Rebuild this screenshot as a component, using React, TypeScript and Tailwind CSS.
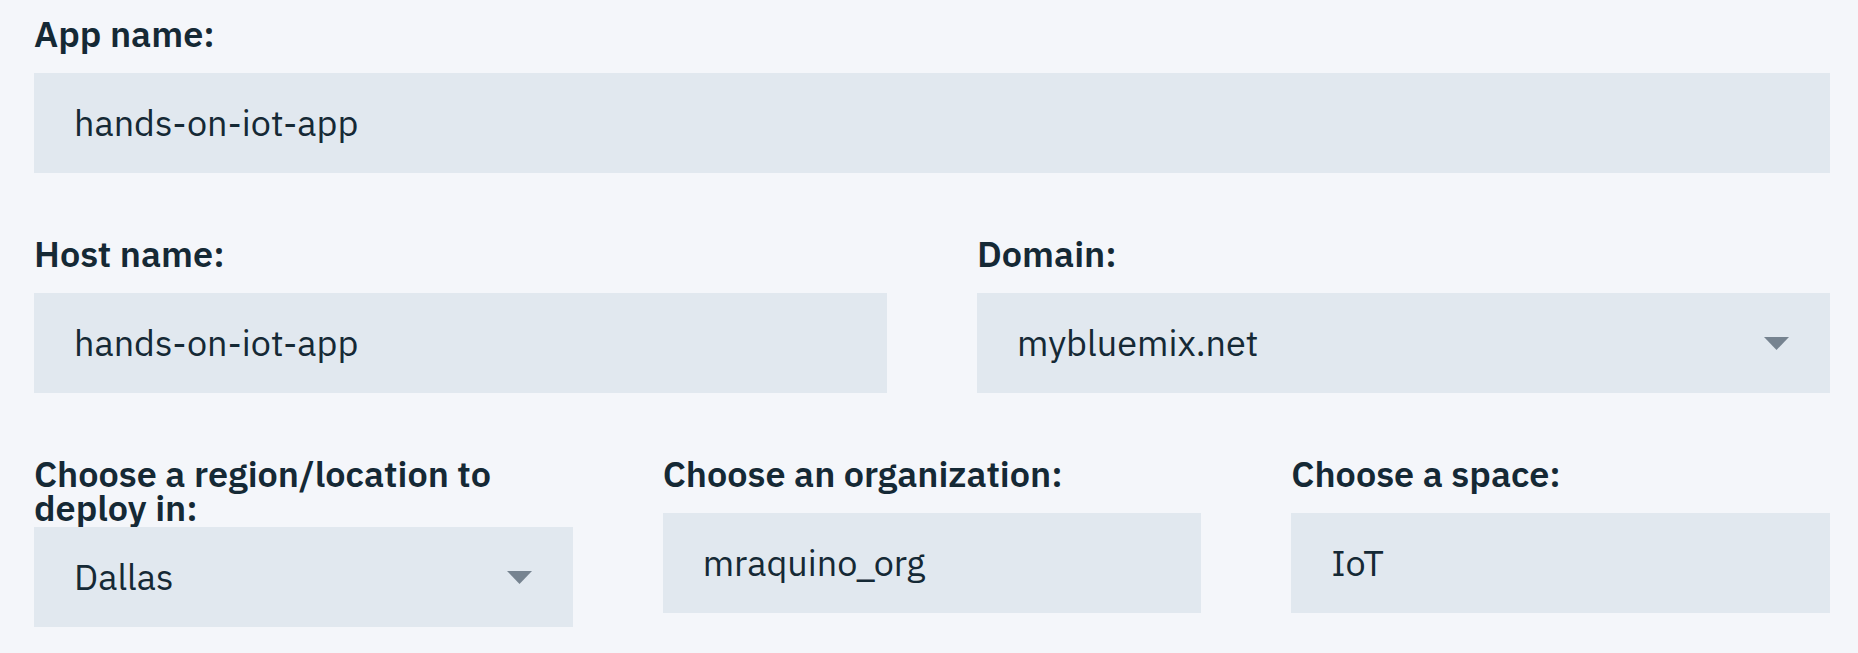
import React from 'react';

const Caret: React.FC = () => (
  <svg width="25" height="13" viewBox="0 0 25 13" className="shrink-0">
    <path d="M0 0 H25 L12.5 13 Z" fill="#768390" />
  </svg>
);

const Field: React.FC<{ label: string; value: string; select?: boolean }> = ({ label, value, select }) => (
  <div className="flex flex-col min-w-0">
    <label className="block min-h-[54px] text-[36px] leading-[34px] font-semibold text-[#152935] mb-[2px]">
      {label}
    </label>
    <div className="h-[100px] bg-[#e1e8ef] flex items-center justify-between pl-[40px] pr-[41px] text-[36px] text-[#152935]">
      <span>{value}</span>
      {select && <Caret />}
    </div>
  </div>
);

const App: React.FC = () => {
  return (
    <div
      className="min-h-screen bg-[#f4f6fa] pl-[34px] pr-[28px] pt-[17px] pb-[26px] flex flex-col gap-[64px]"
      style={{ fontFamily: '"IBM Plex Sans", Inter, "Noto Sans", sans-serif' }}
    >
      <Field label="App name:" value="hands-on-iot-app" />

      <div className="grid grid-cols-2 gap-x-[90px]">
        <Field label="Host name:" value="hands-on-iot-app" />
        <Field label="Domain:" value="mybluemix.net" select />
      </div>

      <div className="grid grid-cols-3 gap-x-[90px]">
        <Field label="Choose a region/location to deploy in:" value="Dallas" select />
        <Field label="Choose an organization:" value="mraquino_org" />
        <Field label="Choose a space:" value="IoT" />
      </div>
    </div>
  );
};

export default App;
